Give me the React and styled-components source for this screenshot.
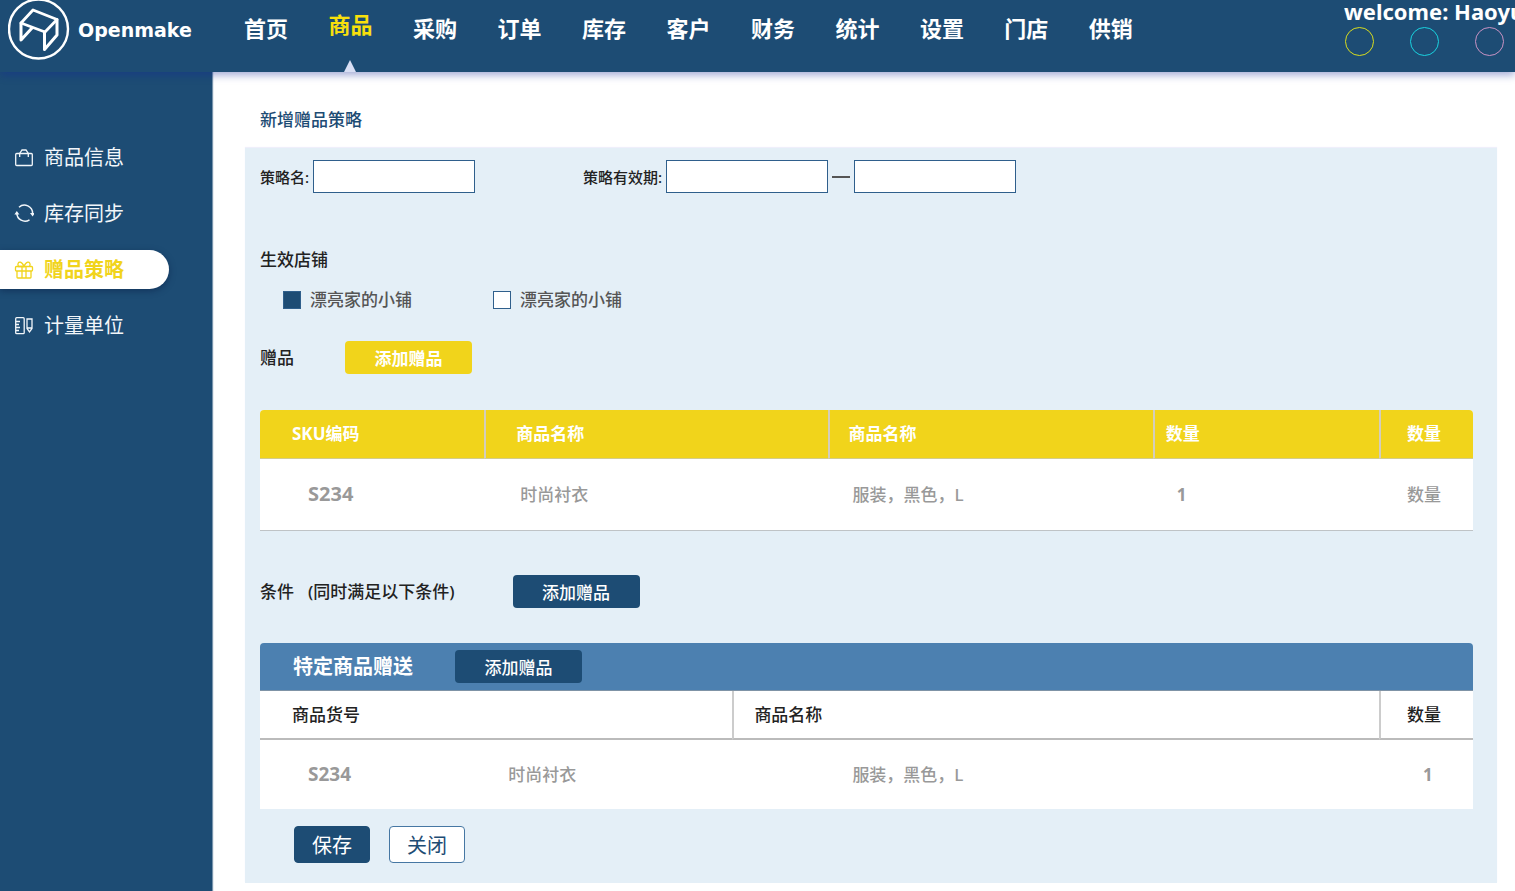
import React, { useState } from "react";
import styled, { createGlobalStyle } from "styled-components";

const navy = "#1d4c74";
const yellow = "#f1d41b";

const GlobalStyle = createGlobalStyle`
  * { box-sizing: border-box; }
  body {
    margin: 0;
    background: #fff;
    color: #222;
    overflow-x: hidden;
    font-family: "Noto Sans", "Noto Sans CJK SC", sans-serif;
    font-size: 17px;
    line-height: 24px;
  }
  button, input { font-family: inherit; }
`;

const Page = styled.div`
  min-height: 100vh;
  display: flex;
  flex-direction: column;
`;

const Header = styled.header`
  position: relative;
  z-index: 2;
  height: 72px;
  display: flex;
  background: ${navy};
  color: #fff;
  box-shadow: 0 3px 8px rgba(20, 40, 150, 0.4);
`;

const Brand = styled.a`
  width: 244px;
  height: 60px;
  flex: none;
  padding-left: 8px;
  display: flex;
  align-items: center;
  gap: 8px;
  color: #fff;
  text-decoration: none;
  font-family: "DejaVu Sans", sans-serif;
  font-size: 19px;
  font-weight: 700;
  svg { flex: none; }
`;

const Nav = styled.nav`
  flex: 1;
  display: flex;
  justify-content: space-between;
`;

const NavLink = styled.a`
  height: ${(p) => (p.$active ? "72px" : "60px")};
  padding-top: ${(p) => (p.$active ? "8px" : "12px")};
  display: flex;
  flex-direction: column;
  align-items: center;
  justify-content: space-between;
  color: ${(p) => (p.$active ? "#f8e00c" : "#fff")};
  font-size: 22px;
  line-height: 32px;
  font-weight: 700;
  text-decoration: none;
`;

const Notch = styled.span`
  border: 6px solid transparent;
  border-top: 0;
  border-bottom: 12px solid #d8def4;
`;

const Account = styled.div`
  width: 171px;
  margin-left: 211px;
  flex: none;
  overflow: hidden;
  white-space: nowrap;
  font-size: 22px;
  line-height: 22px;
  font-weight: 700;
`;

const Dots = styled.div`
  display: flex;
  gap: 36px;
  padding: 5px 0 0 1px;
`;

const Dot = styled.button`
  width: 29px;
  height: 29px;
  flex: none;
  padding: 0;
  border: 1px solid ${(p) => p.$color};
  border-radius: 50%;
  background: none;
`;

const Body = styled.div`
  flex: 1;
  display: flex;
`;

const Sidebar = styled.aside`
  width: 212px;
  flex: none;
  padding-top: 66px;
  display: flex;
  flex-direction: column;
  gap: 17px;
  background: ${navy};
  box-shadow: 1px 0 1px rgba(29, 76, 116, 0.6);
`;

const SideLink = styled.a`
  width: 169px;
  height: 39px;
  padding-left: 14px;
  display: flex;
  align-items: center;
  gap: 10px;
  border-radius: 0 20px 20px 0;
  background: ${(p) => (p.$active ? "#fff" : "transparent")};
  box-shadow: ${(p) => (p.$active ? "0 2px 6px rgba(10, 30, 70, 0.5)" : "none")};
  color: ${(p) => (p.$active ? yellow : "#f2f6fa")};
  font-size: 20px;
  font-weight: ${(p) => (p.$active ? 700 : 400)};
  text-decoration: none;
`;

const Main = styled.main`
  flex: 1;
  min-width: 0;
  padding: 36px 18px 8px 33px;
`;

const Title = styled.h1`
  margin: 0 0 16px;
  padding-left: 15px;
  color: ${navy};
  font-size: 17px;
  line-height: 24px;
  font-weight: 500;
`;

const Panel = styled.form`
  padding: 12px 24px 20px 15px;
  background: #e4eff7;
  box-shadow: 0 -1px 1px #efeffb;
`;

const FieldRow = styled.div`
  display: flex;
  align-items: center;
  gap: 108px;
`;

const Field = styled.div`
  display: flex;
  align-items: center;
  gap: 4px;
  font-size: 15px;
  font-weight: 500;
`;

const TextBox = styled.input`
  width: 162px;
  height: 33px;
  padding: 0 8px;
  border: 1px solid #2f5f8c;
  background: #fff;
  font-size: 15px;
`;

const Dash = styled.span`
  width: 18px;
  height: 2px;
  background: #555;
`;

const Shops = styled.fieldset`
  margin: 55px 0 0;
  padding: 0;
  border: 0;
`;

const Legend = styled.legend`
  padding: 0;
  font-weight: 500;
`;

const ShopList = styled.div`
  display: flex;
  gap: 81px;
  padding: 16px 0 0 23px;
`;

const Shop = styled.label`
  display: flex;
  align-items: center;
  gap: 9px;
  color: #555;
  font-weight: 500;
`;

const Check = styled.input`
  appearance: none;
  width: 18px;
  height: 18px;
  margin: 0;
  border: 1px solid #2f5f8c;
  background: #fff;
  &:checked { background: ${navy}; }
`;

const Section = styled.div`
  margin-top: ${(p) => p.$top}px;
  display: flex;
  align-items: center;
  gap: ${(p) => p.$gap}px;
`;

const SectionTitle = styled.h2`
  margin: 0;
  display: flex;
  gap: 14px;
  font-size: 17px;
  font-weight: 500;
`;

const AddButton = styled.button`
  width: 127px;
  height: 33px;
  padding: 0;
  border: 0;
  border-radius: 4px;
  background: ${(p) => (p.$yellow ? yellow : navy)};
  color: #fff;
  font-size: 17px;
  font-weight: ${(p) => (p.$yellow ? 700 : 500)};
`;

const Table = styled.table`
  width: 100%;
  table-layout: fixed;
  border-collapse: separate;
  border-spacing: 0;
  background: #fff;
`;

/* Column widths are shares: a fixed layout spreads the rest in proportion. */
const Col = styled.col`
  width: ${(p) => p.$w}px;
`;

const HeadCell = styled.th`
  height: 49px;
  padding: 0 0 0 ${(p) => p.$pad}px;
  text-align: left;
  white-space: nowrap;
`;

const Cell = styled.td`
  height: ${(p) => p.$h || 71}px;
  padding: 0 0 0 ${(p) => p.$pad}px;
  color: #999;
  font-weight: 500;
  white-space: nowrap;
`;

const GiftTable = styled(Table)`
  margin-top: 36px;
  border-radius: 4px 4px 0 0;
  overflow: hidden;
  border-bottom: 1px solid #bfc3c6;
  ${HeadCell} {
    background: ${yellow};
    color: #fff;
    font-weight: 700;
    border-bottom: 1px solid #d2cc8c;
    & + ${HeadCell} { border-left: 2px solid #d3cdbd; }
  }
`;

const Code = styled.span`
  font-size: ${(p) => p.$size}px;
  font-weight: 700;
`;

const Banner = styled.div`
  height: 48px;
  margin-top: 35px;
  padding-left: 33px;
  display: flex;
  align-items: center;
  gap: 42px;
  border-radius: 4px 4px 0 0;
  border-bottom: 1px solid #7f93a6;
  background: #4c80b0;
`;

const BannerTitle = styled.h3`
  margin: 0;
  color: #fff;
  font-size: 20px;
  font-weight: 700;
`;

const RuleTable = styled(Table)`
  ${HeadCell} {
    font-weight: 500;
    border-bottom: 2px solid #bbb;
    & + ${HeadCell} { border-left: 2px solid #ccc; }
  }
`;

const Actions = styled.div`
  display: flex;
  gap: 19px;
  padding: 17px 0 0 34px;
`;

const ActionButton = styled.button`
  width: 76px;
  height: 37px;
  padding: 0;
  border: 1px solid ${(p) => (p.$solid ? navy : "#4677a3")};
  border-radius: 4px;
  background: ${(p) => (p.$solid ? navy : "#fff")};
  color: ${(p) => (p.$solid ? "#fff" : navy)};
  font-size: 20px;
`;

const Logo = () => (
  <svg width="62" height="60" viewBox="0 0 62 60" fill="none" stroke="#fff" strokeLinejoin="round" strokeLinecap="round" aria-hidden="true">
    <circle cx="30.5" cy="29" r="29.5" strokeWidth="2.4" />
    <path d="M25 10 49 19.500 37 32 13 23Z" strokeWidth="2.8" />
    <path d="M13 23V40L24 28M49 19.500V35L36.500 49.500V32" strokeWidth="3" />
  </svg>
);

const iconProps = { width: 20, height: 20, viewBox: "0 0 20 20", fill: "none", stroke: "currentColor", strokeWidth: 1.3, "aria-hidden": true };

const BagIcon = () => (
  <svg {...iconProps}>
    <rect x="1.700" y="5.500" width="16.600" height="12" rx="1" />
    <path d="M5.700 9V5.500L8 2h4L14.300 5.500v3.500" />
  </svg>
);

const SyncIcon = () => (
  <svg {...iconProps} strokeWidth="1.5">
    <path d="M5 3.200A8.200 8.200 0 0 1 18.600 9.500M15.500 15.800A8.200 8.200 0 0 1 2.800 9" />
    <path d="M16 9h5l-2.400 3.500zM.4 10.500h5L2.800 7z" fill="currentColor" stroke="none" />
  </svg>
);

const GiftIcon = () => (
  <svg {...iconProps}>
    <rect x="1.500" y="6.500" width="17" height="4.500" rx="1" />
    <path d="M3 11v6.200q0 .8.8.8h12.400q.8 0 .8-.8V11M8 6.500V18M12 6.500V18M10 6.500H4.500C3 4 4.500 1.800 6.300 2.200S9 4 10 6.500c1-2.500 2-3.900 3.700-4.300S17 4 15.500 6.500" />
  </svg>
);

const RulerIcon = () => (
  <svg {...iconProps}>
    <rect x="1.700" y="1.700" width="8.500" height="16" rx="1" />
    <path d="M2 5.500h4M2 8.500h3M2 11.500h4M2 14.500h3M13 3h5v9.500L15.500 16 13 12.500zM13 12h5" />
  </svg>
);

const navItems = ["首页", "商品", "采购", "订单", "库存", "客户", "财务", "统计", "设置", "门店", "供销"];
const sideItems = [
  ["商品信息", BagIcon],
  ["库存同步", SyncIcon],
  ["赠品策略", GiftIcon],
  ["计量单位", RulerIcon],
];

export default function App() {
  const [shops, setShops] = useState([true, false]);
  const toggle = (i) => setShops(shops.map((v, n) => (n === i ? !v : v)));

  return (
    <Page>
      <GlobalStyle />
      <Header>
        <Brand href="#">
          <Logo />
          Openmake
        </Brand>
        <Nav>
          {navItems.map((name) => (
            <NavLink key={name} href="#" $active={name === "商品"}>
              {name}
              {name === "商品" && <Notch />}
            </NavLink>
          ))}
        </Nav>
        <Account>
          welcome: Haoyu
          <Dots>
            <Dot type="button" $color="#d9dd1e" aria-label="消息" />
            <Dot type="button" $color="#19d3e0" aria-label="帮助" />
            <Dot type="button" $color="#c993c4" aria-label="退出" />
          </Dots>
        </Account>
      </Header>
      <Body>
        <Sidebar>
          {sideItems.map(([name, Icon]) => (
            <SideLink key={name} href="#" $active={name === "赠品策略"}>
              <Icon />
              {name}
            </SideLink>
          ))}
        </Sidebar>
        <Main>
          <Title>新增赠品策略</Title>
          <Panel onSubmit={(e) => e.preventDefault()}>
            <FieldRow>
              <Field>
                <label htmlFor="name">策略名:</label>
                <TextBox id="name" />
              </Field>
              <Field>
                <label htmlFor="from">策略有效期:</label>
                <TextBox id="from" />
                <Dash />
                <TextBox id="to" aria-label="策略有效期至" />
              </Field>
            </FieldRow>

            <Shops>
              <Legend>生效店铺</Legend>
              <ShopList>
                {shops.map((on, i) => (
                  <Shop key={i}>
                    <Check type="checkbox" checked={on} onChange={() => toggle(i)} />
                    漂亮家的小铺
                  </Shop>
                ))}
              </ShopList>
            </Shops>

            <Section $top={29} $gap={51}>
              <SectionTitle>赠品</SectionTitle>
              <AddButton type="button" $yellow>添加赠品</AddButton>
            </Section>

            <GiftTable>
              <colgroup>
                <Col $w={112} />
                <Col $w={172} />
                <Col $w={162} />
                <Col $w={113} />
                <Col $w={47} />
              </colgroup>
              <thead>
                <tr>
                  <HeadCell $pad={32}>SKU编码</HeadCell>
                  <HeadCell $pad={30}>商品名称</HeadCell>
                  <HeadCell $pad={18}>商品名称</HeadCell>
                  <HeadCell $pad={11}>数量</HeadCell>
                  <HeadCell $pad={26}>数量</HeadCell>
                </tr>
              </thead>
              <tbody>
                <tr>
                  <Cell $pad={48}><Code $size={20}>S234</Code></Cell>
                  <Cell $pad={36}>时尚衬衣</Cell>
                  <Cell $pad={24}>服装，黑色，L</Cell>
                  <Cell $pad={24}><Code $size={17}>1</Code></Cell>
                  <Cell $pad={28}>数量</Cell>
                </tr>
              </tbody>
            </GiftTable>

            <Section $top={44} $gap={58}>
              <SectionTitle>
                <span>条件</span>
                <span>(同时满足以下条件)</span>
              </SectionTitle>
              <AddButton type="button">添加赠品</AddButton>
            </Section>

            <Banner>
              <BannerTitle>特定商品赠送</BannerTitle>
              <AddButton type="button">添加赠品</AddButton>
            </Banner>
            <RuleTable>
              <colgroup>
                <Col $w={112} />
                <Col $w={124} />
                <Col $w={323} />
                <Col $w={47} />
              </colgroup>
              <thead>
                <tr>
                  <HeadCell $pad={32} colSpan={2}>商品货号</HeadCell>
                  <HeadCell $pad={20}>商品名称</HeadCell>
                  <HeadCell $pad={26}>数量</HeadCell>
                </tr>
              </thead>
              <tbody>
                <tr>
                  <Cell $h={69} $pad={48}><Code $size={19}>S234</Code></Cell>
                  <Cell $h={69} $pad={24}>时尚衬衣</Cell>
                  <Cell $h={69} $pad={120}>服装，黑色，L</Cell>
                  <Cell $h={69} $pad={44}><Code $size={17}>1</Code></Cell>
                </tr>
              </tbody>
            </RuleTable>

            <Actions>
              <ActionButton type="submit" $solid>保存</ActionButton>
              <ActionButton type="button">关闭</ActionButton>
            </Actions>
          </Panel>
        </Main>
      </Body>
    </Page>
  );
}
